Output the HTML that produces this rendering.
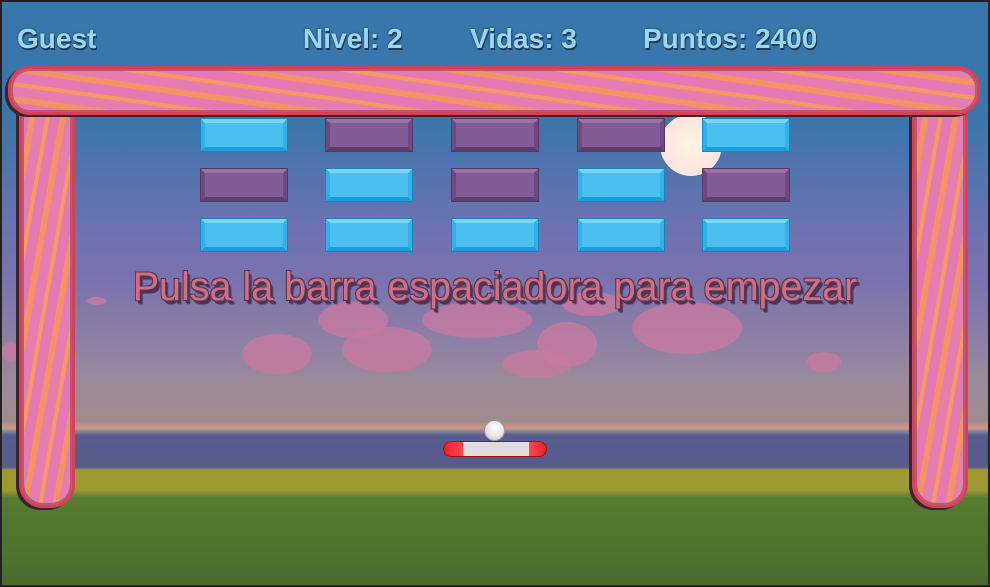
<!DOCTYPE html>
<html><head><meta charset="utf-8"><style>
*{margin:0;padding:0;box-sizing:border-box}
body{width:990px;height:587px;overflow:hidden;background:#222;font-family:"Liberation Sans",sans-serif}
#g{position:absolute;left:2px;top:2px;width:986px;height:583px;overflow:hidden;
background:linear-gradient(180deg,#3877ab 0px,#3877ab 110px,#4d74ad 160px,#6c72b2 220px,#7a73ae 280px,#8a7ea6 330px,#9a8a98 380px,#a08c8e 420px,#d7958a 426px,#8c8a96 429px,#585c8e 433px,#575c8c 465px,#9c9a30 468px,#9e9a32 488px,#587b31 496px,#4a6c2c 583px)}
.hud{position:absolute;top:21px;font-size:28px;font-weight:bold;color:#9ad6f4;text-shadow:1px 2px 0 #1d3c55,0 0 2px #1d3c55}
.wood{position:absolute;border:3px solid #d8405a;box-shadow:inset 0 0 0 2px #b75a72,-3px 2px 0 #3a2430;
background:repeating-linear-gradient(var(--a),#e37ab3 0 10px,#f39363 10px 16px,#e47db0 16px 26px,#f49a5e 26px 30px)}
.b{position:absolute;width:86px;height:32px;border:4px solid;}
.c{background:#4bbfee;border-color:#7fd1f5 #35b0e6 #199fd8 #35b0e6;outline:1px solid #1b86bd}
.p{background:#825c96;border-color:#9a73ab #6e4a82 #5f3f70 #6e4a82;outline:1px solid #563866}
.cl{position:absolute;background:#c7799f;border-radius:50%;opacity:.8}
#msg{position:absolute;left:0;width:986px;top:263px;text-align:center;font-size:39.5px;color:#cf6f86;text-shadow:-1px -1px 0 #5a3a52,1px -1px 0 #5a3a52,-1px 1px 0 #5a3a52,2px 3px 0 #4e3452,3px 4px 1px #4e3452}
</style></head><body><div id="g">
<div class="cl" style="left:316px;top:300px;width:70px;height:36px"></div>
<div class="cl" style="left:240px;top:332px;width:70px;height:40px"></div>
<div class="cl" style="left:340px;top:325px;width:90px;height:45px"></div>
<div class="cl" style="left:420px;top:300px;width:110px;height:36px"></div>
<div class="cl" style="left:535px;top:320px;width:60px;height:45px"></div>
<div class="cl" style="left:500px;top:348px;width:70px;height:28px"></div>
<div class="cl" style="left:630px;top:300px;width:110px;height:52px"></div>
<div class="cl" style="left:560px;top:290px;width:60px;height:24px"></div>
<div class="cl" style="left:805px;top:350px;width:34px;height:20px"></div>
<div class="cl" style="left:85px;top:295px;width:20px;height:8px"></div>
<div class="cl" style="left:0;top:340px;width:18px;height:20px"></div>
<div style="position:absolute;left:658px;top:112px;width:62px;height:62px;border-radius:50%;background:radial-gradient(circle,#fff6e0 0,#fde6e2 60%,#f7e4ea 100%)"></div>
<div class="hud" style="left:15px">Guest</div>
<div class="hud" style="left:301px">Nivel: 2</div>
<div class="hud" style="left:468px">Vidas: 3</div>
<div class="hud" style="left:641px">Puntos: 2400</div>
<div class="wood" style="--a:100deg;left:17px;top:96px;width:56px;height:410px;border-radius:4px 4px 24px 24px"></div>
<div class="wood" style="--a:100deg;left:910px;top:96px;width:56px;height:410px;border-radius:4px 4px 24px 24px"></div>
<div class="wood" style="--a:8deg;left:6px;top:64px;width:972px;height:49px;border-radius:22px"></div>
<div class="b c" style="left:199px;top:117px"></div><div class="b p" style="left:324px;top:117px"></div><div class="b p" style="left:450px;top:117px"></div><div class="b p" style="left:576px;top:117px"></div><div class="b c" style="left:701px;top:117px"></div>
<div class="b p" style="left:199px;top:167px"></div><div class="b c" style="left:324px;top:167px"></div><div class="b p" style="left:450px;top:167px"></div><div class="b c" style="left:576px;top:167px"></div><div class="b p" style="left:701px;top:167px"></div>
<div class="b c" style="left:199px;top:217px"></div><div class="b c" style="left:324px;top:217px"></div><div class="b c" style="left:450px;top:217px"></div><div class="b c" style="left:576px;top:217px"></div><div class="b c" style="left:701px;top:217px"></div>
<div id="msg">Pulsa la barra espaciadora para empezar</div>
<div style="position:absolute;left:482px;top:418px;width:21px;height:21px;border-radius:50%;background:radial-gradient(circle at 55% 35%,#fff 0,#e8e8e8 50%,#bdbdbd 100%);border:1px solid #999"></div>
<div style="position:absolute;left:441px;top:439px;width:104px;height:16px;border-radius:8px;background:linear-gradient(90deg,#e8202a 0,#ff4a50 19px,#ddd 19px,#ddd 85px,#ff4a50 85px,#e8202a 100%);border:1px solid #a01018"></div>
</div></body></html>
